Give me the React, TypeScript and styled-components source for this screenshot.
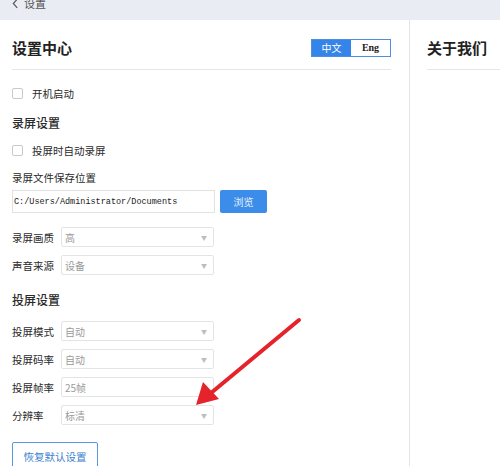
import styled, { createGlobalStyle } from "styled-components";

const GlobalStyle = createGlobalStyle`
  html, body {
    margin: 0;
    padding: 0;
    background: #fff;
  }
  body {
    font-family: "Noto Sans CJK SC", "Noto Sans", sans-serif;
    color: #333;
  }
`;

const recordSelects = [
  { label: "录屏画质", value: "高" },
  { label: "声音来源", value: "设备" },
];

const castSelects = [
  { label: "投屏模式", value: "自动" },
  { label: "投屏码率", value: "自动" },
  { label: "投屏帧率", value: "25帧" },
  { label: "分辨率", value: "标清" },
];

const App = () => {
  return (
    <Page>
      <GlobalStyle />
      <TopBar>
        <BackLink>
          <Chevron viewBox="0 0 8 12">
            <path d="M6 1 L1.5 6 L6 11" fill="none" stroke="#555" strokeWidth="1.3" />
          </Chevron>
          设置
        </BackLink>
      </TopBar>
      <Body>
        <LeftPanel>
          <PanelHeader>
            <Title>设置中心</Title>
            <LangToggle>
              <LangOption $active>中文</LangOption>
              <LangOption $serif>Eng</LangOption>
            </LangToggle>
          </PanelHeader>

          <CheckRow $mt={13}>
            <CheckBox />
            开机启动
          </CheckRow>

          <SectionTitle $mt={11}>录屏设置</SectionTitle>
          <CheckRow $mt={8}>
            <CheckBox />
            投屏时自动录屏
          </CheckRow>
          <FieldLabel $mt={10}>录屏文件保存位置</FieldLabel>
          <PathRow>
            <PathInput>C:/Users/Administrator/Documents</PathInput>
            <BrowseButton>浏览</BrowseButton>
          </PathRow>

          {recordSelects.map((s, i) => (
            <SelectRow key={s.label} $mt={i === 0 ? 14 : 8}>
              <SelectLabel>{s.label}</SelectLabel>
              <SelectBox>
                {s.value}
                <Caret>▼</Caret>
              </SelectBox>
            </SelectRow>
          ))}

          <SectionTitle $mt={16}>投屏设置</SectionTitle>
          {castSelects.map((s, i) => (
            <SelectRow key={s.label} $mt={i === 0 ? 12 : 8}>
              <SelectLabel>{s.label}</SelectLabel>
              <SelectBox>
                {s.value}
                <Caret>▼</Caret>
              </SelectBox>
            </SelectRow>
          ))}

          <ResetButton>恢复默认设置</ResetButton>
        </LeftPanel>
        <RightPanel>
          <PanelHeader>
            <Title>关于我们</Title>
          </PanelHeader>
        </RightPanel>
      </Body>

      <Annotation viewBox="0 0 500 466">
        <line x1="299" y1="320" x2="211" y2="393" stroke="#e5232b" strokeWidth="4" strokeLinecap="round" />
        <polygon points="196,405 203,382 219,399" fill="#e5232b" />
      </Annotation>
    </Page>
  );
};

export default App;

const Page = styled.div`
  position: relative;
  width: 500px;
  height: 466px;
  overflow: hidden;
  display: flex;
  flex-direction: column;
`;

const TopBar = styled.div`
  height: 20px;
  background: #e9edf3;
  overflow: hidden;
  flex-shrink: 0;
`;

const BackLink = styled.div`
  display: flex;
  align-items: center;
  gap: 5px;
  margin: -6px 0 0 12px;
  font-size: 11px;
  line-height: 18px;
  color: #555;
`;

const Chevron = styled.svg`
  width: 7px;
  height: 11px;
`;

const Body = styled.div`
  flex: 1;
  display: flex;
`;

const LeftPanel = styled.div`
  width: 410px;
  box-sizing: border-box;
  padding: 0 18px 0 12px;
  border-right: 1px solid #e4e4e4;
  display: flex;
  flex-direction: column;
  align-items: flex-start;
`;

const RightPanel = styled.div`
  flex: 1;
  padding-left: 17px;
`;

const PanelHeader = styled.div`
  align-self: stretch;
  height: 50px;
  box-sizing: border-box;
  padding-top: 6px;
  display: flex;
  align-items: center;
  justify-content: space-between;
  border-bottom: 1px solid #e6e6e6;
`;

const Title = styled.div`
  font-size: 15px;
  font-weight: 700;
  color: #222;
`;

const LangToggle = styled.div`
  display: flex;
  height: 18px;
  border: 1px solid #4a8fe3;
  box-sizing: border-box;
`;

const LangOption = styled.div<{ $active?: boolean; $serif?: boolean }>`
  width: 39px;
  display: flex;
  align-items: center;
  justify-content: center;
  font-size: 10px;
  font-weight: ${(p) => (p.$serif ? 700 : 400)};
  font-family: ${(p) =>
    p.$serif ? '"Liberation Serif", serif' : '"Noto Sans CJK SC", sans-serif'};
  background: ${(p) => (p.$active ? "#3584ea" : "#fff")};
  color: ${(p) => (p.$active ? "#fff" : "#222")};
`;

const CheckRow = styled.div<{ $mt: number }>`
  margin-top: ${(p) => p.$mt}px;
  height: 20px;
  display: flex;
  align-items: center;
  gap: 9px;
  font-size: 10.5px;
  color: #2a2a2a;
`;

const CheckBox = styled.span`
  width: 11px;
  height: 11px;
  box-sizing: border-box;
  border: 1px solid #c9c9c9;
  border-radius: 2px;
  background: #fff;
`;

const SectionTitle = styled.div<{ $mt: number }>`
  margin-top: ${(p) => p.$mt}px;
  font-size: 12px;
  line-height: 18px;
  font-weight: 500;
  color: #2a2a2a;
`;

const FieldLabel = styled.div<{ $mt: number }>`
  margin-top: ${(p) => p.$mt}px;
  font-size: 10.5px;
  line-height: 16px;
  color: #2a2a2a;
`;

const PathRow = styled.div`
  margin-top: 4px;
  display: flex;
  gap: 5px;
`;

const PathInput = styled.div`
  width: 203px;
  height: 23px;
  box-sizing: border-box;
  border: 1px solid #e2e2e2;
  padding-left: 1px;
  display: flex;
  align-items: center;
  font-family: "Liberation Mono", monospace;
  font-size: 8.5px;
  color: #222;
`;

const BrowseButton = styled.div`
  width: 47px;
  height: 23px;
  border-radius: 2px;
  background: #3c8de9;
  color: #e6f0fc;
  font-size: 10px;
  display: flex;
  align-items: center;
  justify-content: center;
`;

const SelectRow = styled.div<{ $mt: number }>`
  margin-top: ${(p) => p.$mt}px;
  display: flex;
  align-items: center;
`;

const SelectLabel = styled.div`
  width: 49px;
  font-size: 10.5px;
  color: #2a2a2a;
`;

const SelectBox = styled.div`
  position: relative;
  width: 153px;
  height: 20px;
  box-sizing: border-box;
  border: 1px solid #e4e4e4;
  border-radius: 2px;
  padding-left: 3px;
  display: flex;
  align-items: center;
  font-size: 10px;
  color: #9a9a9a;
`;

const Caret = styled.span`
  position: absolute;
  right: 6px;
  top: 50%;
  transform: translateY(-50%);
  font-size: 6px;
  color: #bdbdbd;
`;

const ResetButton = styled.div`
  margin-top: 17px;
  width: 86px;
  height: 28px;
  box-sizing: border-box;
  border: 1px solid #5b97dc;
  border-radius: 2px;
  display: flex;
  align-items: center;
  justify-content: center;
  font-size: 10.5px;
  color: #3b7fd0;
`;

const Annotation = styled.svg`
  position: absolute;
  left: 0;
  top: 0;
  width: 500px;
  height: 466px;
  pointer-events: none;
`;
